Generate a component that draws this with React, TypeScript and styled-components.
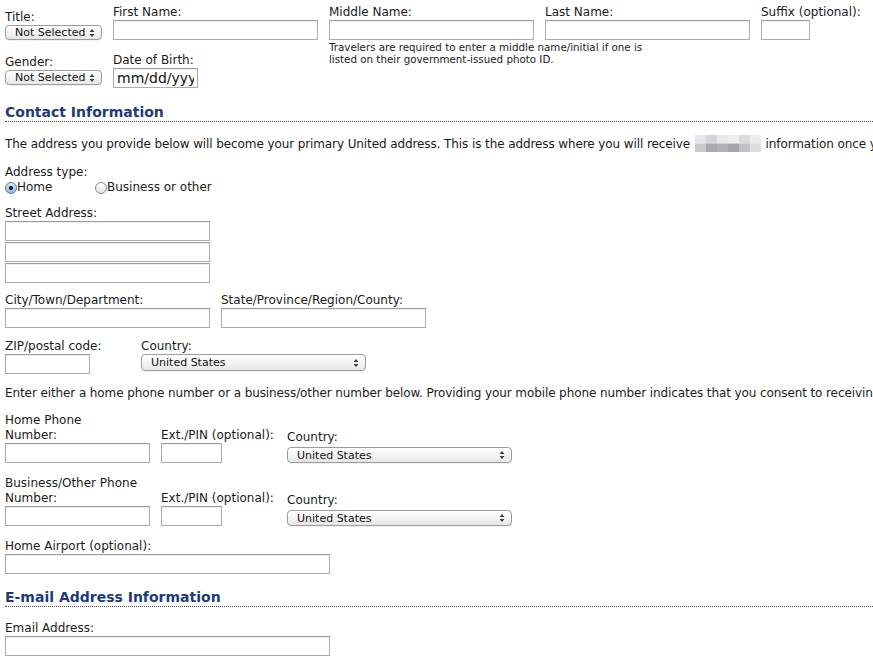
import React from 'react';
import styled, { createGlobalStyle } from 'styled-components';

const Global = createGlobalStyle`
  html, body { margin: 0; padding: 0; background: #fff; }
  body {
    font-family: "DejaVu Sans", Verdana, sans-serif;
    font-size: 12px;
    color: #1a1a1a;
    overflow: hidden;
    width: 873px;
    height: 660px;
  }
`;

const Page = styled.div`
  padding: 5px 0 0 5px;
  width: 1400px;
`;

const NameGrid = styled.div`
  display: grid;
  grid-template-columns: 108px 216px 216px 216px 60px;
  grid-template-rows: auto 48px;
  align-items: end;
`;

const Cell = styled.div<{ $col: number; $row: number; $mb?: number }>`
  grid-column: ${p => p.$col};
  grid-row: ${p => p.$row};
  margin-bottom: ${p => p.$mb ?? 0}px;
`;

const NoteCell = styled.div`
  grid-column: 3 / span 2;
  grid-row: 2;
  align-self: start;
  margin-top: 1px;
  font-size: 10.3px;
  line-height: 12px;
  color: #1a1a1a;
`;

const Label = styled.label`
  display: block;
  line-height: 15px;
  white-space: nowrap;
`;

const TextInput = styled.input<{ $w: number; $big?: boolean }>`
  display: block;
  box-sizing: border-box;
  width: ${p => p.$w}px;
  height: 20px;
  margin: 0;
  padding: 0 3px;
  border: 1px solid #acacac;
  border-top-color: #9b9b9b;
  box-shadow: inset 0 1px 1px rgba(0, 0, 0, 0.07);
  background: #fff;
  font-family: "DejaVu Sans", Verdana, sans-serif;
  font-size: ${p => (p.$big ? 14 : 12)}px;
  color: #111;
  &::placeholder { color: #111; opacity: 1; }
`;

const StackedInputs = styled.div`
  display: flex;
  flex-direction: column;
  gap: 1px;
`;

const SelectBox = styled.div<{ $w: number; $h: number; $mt?: number }>`
  position: relative;
  width: ${p => p.$w}px;
  height: ${p => p.$h}px;
  margin-top: ${p => p.$mt ?? 0}px;
`;

const NativeSelect = styled.select`
  appearance: none;
  -webkit-appearance: none;
  box-sizing: border-box;
  width: 100%;
  height: 100%;
  margin: 0;
  padding: 0 0 0 9px;
  border: 1px solid #9c9c9c;
  border-radius: 4px;
  background: linear-gradient(#ffffff, #f1f1f1 60%, #e6e6e6);
  box-shadow: 0 1px 0 rgba(0, 0, 0, 0.06);
  font-family: "DejaVu Sans", Verdana, sans-serif;
  font-size: 11px;
  line-height: 1;
  color: #111;
`;

const Arrows = styled.svg`
  position: absolute;
  right: 7px;
  top: 50%;
  transform: translateY(-50%);
  pointer-events: none;
`;

const Select: React.FC<{ w: number; h: number; mt?: number; value: string }> = ({ w, h, mt, value }) => (
  <SelectBox $w={w} $h={h} $mt={mt}>
    <NativeSelect defaultValue={value}>
      <option>{value}</option>
    </NativeSelect>
    <Arrows width="6" height="9" viewBox="0 0 6 9">
      <path d="M0.6 3.6 L3 0.6 L5.4 3.6 Z" fill="#3a3a3a" />
      <path d="M0.6 5.4 L3 8.4 L5.4 5.4 Z" fill="#3a3a3a" />
    </Arrows>
  </SelectBox>
);

const SectionTitle = styled.h2<{ $mt: number }>`
  margin: ${p => p.$mt}px 0 0;
  padding: 0;
  font-family: "DejaVu Sans", Verdana, sans-serif;
  font-weight: bold;
  font-size: 14px;
  line-height: 17px;
  color: #1d3b7a;
  border-bottom: 1px dotted #4a4a4a;
  width: 868px;
`;

const Para = styled.p<{ $mt: number }>`
  margin: ${p => p.$mt}px 0 0;
  line-height: 15px;
  white-space: nowrap;
  letter-spacing: -0.1px;
`;

const Group = styled.div<{ $mt: number }>`
  margin-top: ${p => p.$mt}px;
`;

const Row = styled.div<{ $align?: string }>`
  display: flex;
  align-items: ${p => p.$align ?? 'flex-start'};
`;

const Col = styled.div<{ $w?: number }>`
  ${p => (p.$w ? `width: ${p.$w}px; flex: 0 0 ${p.$w}px;` : '')}
`;

const RadioRow = styled.div`
  display: flex;
  align-items: center;
  height: 15px;
`;

const RadioOption = styled.label<{ $w?: number }>`
  display: flex;
  align-items: center;
  ${p => (p.$w ? `width: ${p.$w}px;` : '')}
  line-height: 15px;
`;

const Radio = styled.input`
  appearance: none;
  -webkit-appearance: none;
  box-sizing: border-box;
  width: 12px;
  height: 12px;
  margin: 0;
  border: 1px solid #8a8a8a;
  border-radius: 50%;
  background: linear-gradient(#ffffff, #e4e4e4);
  &:checked {
    border-color: #5a7fae;
    background: radial-gradient(circle, #1e1e1e 0 1.8px, transparent 2.4px),
      linear-gradient(#d6e6f8, #93b7e2);
  }
`;

const Redacted = styled.svg`
  display: inline-block;
  vertical-align: -4px;
  margin: 0 1px;
`;

const blurCells = [
  ['#e6e6ea', '#d4d4da', '#e9e9ec', '#eeeeef', '#d9d9de', '#ececee'],
  ['#c9c9cd', '#a9a9ad', '#b1b1b5', '#a6a6aa', '#c2c2c6', '#dcdcdf'],
];

const App: React.FC = () => (
  <>
    <Global />
    <Page>
      <NameGrid>
        <Cell $col={1} $row={1}>
          <Label>Title:</Label>
          <Select w={97} h={15} value="Not Selected" />
        </Cell>
        <Cell $col={2} $row={1}>
          <Label>First Name:</Label>
          <TextInput $w={205} />
        </Cell>
        <Cell $col={3} $row={1}>
          <Label>Middle Name:</Label>
          <TextInput $w={205} />
        </Cell>
        <Cell $col={4} $row={1}>
          <Label>Last Name:</Label>
          <TextInput $w={205} />
        </Cell>
        <Cell $col={5} $row={1}>
          <Label>Suffix (optional):</Label>
          <TextInput $w={49} />
        </Cell>
        <Cell $col={1} $row={2} $mb={3}>
          <Label>Gender:</Label>
          <Select w={97} h={15} value="Not Selected" />
        </Cell>
        <Cell $col={2} $row={2}>
          <Label>Date of Birth:</Label>
          <TextInput $w={85} $big placeholder="mm/dd/yyyy" />
        </Cell>
        <NoteCell>
          Travelers are required to enter a middle name/initial if one is
          <br />
          listed on their government-issued photo ID.
        </NoteCell>
      </NameGrid>

      <SectionTitle $mt={16}>Contact Information</SectionTitle>
      <Para $mt={13}>
        The address you provide below will become your primary United address. This is the address where you will receive{' '}
        <Redacted width="66" height="17" viewBox="0 0 66 17">
          {blurCells.map((row, r) =>
            row.map((c, i) => <rect key={`${r}-${i}`} x={i * 11} y={r * 8.5} width="11" height="8.5" fill={c} />)
          )}
        </Redacted>{' '}
        information once you have completed your enrollment.
      </Para>

      <Group $mt={13}>
        <Label>Address type:</Label>
        <RadioRow>
          <RadioOption $w={90}>
            <Radio type="radio" name="atype" defaultChecked />
            Home
          </RadioOption>
          <RadioOption>
            <Radio type="radio" name="atype" />
            Business or other
          </RadioOption>
        </RadioRow>
      </Group>

      <Group $mt={11}>
        <Label>Street Address:</Label>
        <StackedInputs>
          <TextInput $w={205} />
          <TextInput $w={205} />
          <TextInput $w={205} />
        </StackedInputs>
      </Group>

      <Group $mt={10}>
        <Row>
          <Col $w={216}>
            <Label>City/Town/Department:</Label>
            <TextInput $w={205} />
          </Col>
          <Col>
            <Label>State/Province/Region/County:</Label>
            <TextInput $w={205} />
          </Col>
        </Row>
      </Group>

      <Group $mt={11}>
        <Row>
          <Col $w={136}>
            <Label>ZIP/postal code:</Label>
            <TextInput $w={85} />
          </Col>
          <Col>
            <Label>Country:</Label>
            <Select w={225} h={17} value="United States" />
          </Col>
        </Row>
      </Group>

      <Para $mt={12}>
        Enter either a home phone number or a business/other number below. Providing your mobile phone number indicates that you consent to receiving text messages.
      </Para>

      <Group $mt={12}>
        <Row $align="flex-end">
          <Col $w={156}>
            <Label>
              Home Phone
              <br />
              Number:
            </Label>
            <TextInput $w={145} />
          </Col>
          <Col $w={126}>
            <Label>Ext./PIN (optional):</Label>
            <TextInput $w={61} />
          </Col>
          <Col>
            <Label>Country:</Label>
            <Select w={225} h={16} mt={2} value="United States" />
          </Col>
        </Row>
      </Group>

      <Group $mt={13}>
        <Row $align="flex-end">
          <Col $w={156}>
            <Label>
              Business/Other Phone
              <br />
              Number:
            </Label>
            <TextInput $w={145} />
          </Col>
          <Col $w={126}>
            <Label>Ext./PIN (optional):</Label>
            <TextInput $w={61} />
          </Col>
          <Col>
            <Label>Country:</Label>
            <Select w={225} h={16} mt={2} value="United States" />
          </Col>
        </Row>
      </Group>

      <Group $mt={13}>
        <Label>Home Airport (optional):</Label>
        <TextInput $w={325} />
      </Group>

      <SectionTitle $mt={15}>E-mail Address Information</SectionTitle>

      <Group $mt={14}>
        <Label>Email Address:</Label>
        <TextInput $w={325} />
      </Group>
    </Page>
  </>
);

export default App;
